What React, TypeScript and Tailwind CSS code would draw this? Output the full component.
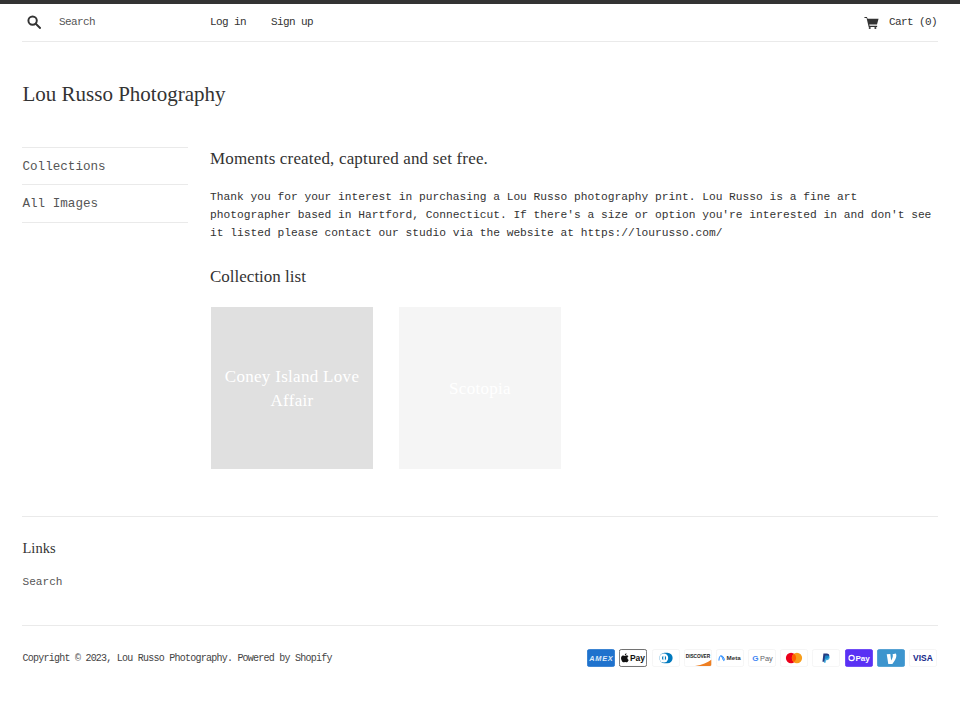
const mono = "font-['Liberation_Mono',monospace]"
const serif = "font-['Liberation_Serif',serif]"

const Card = ({ children, bg = '#fff', border = '#f2f2f2' }: { children: React.ReactNode; bg?: string; border?: string }) => (
  <svg width="28" height="18" viewBox="0 0 38 24" className="block">
    <rect x="0.5" y="0.5" width="37" height="23" rx="2.5" fill={bg} stroke={border} />
    {children}
  </svg>
)

const cardText = 'Liberation Sans, sans-serif'

function PaymentIcons() {
  return (
    <div className="mr-[1px] flex items-center gap-[4.2px]">
      <Card bg="#1f72cd" border="#1f72cd">
        <text x="19" y="15.5" textAnchor="middle" fontFamily={cardText} fontSize="10" fontWeight="700" fontStyle="italic" fill="#dbe9f8" textLength="32">AMEX</text>
      </Card>
      <Card border="#3c3c3c">
        <path d="M8.600 8.600c-.5.5-1.200.9-1.800.8-.1-.7.2-1.400.6-1.900.5-.5 1.200-.9 1.800-.9.1.8-.2 1.500-.6 2zm.6 1c-1-.1-1.900.6-2.400.6s-1.200-.6-2-.6c-1 0-2 .6-2.500 1.500-1.100 1.900-.3 4.700.8 6.200.5.8 1.200 1.600 2 1.600.8 0 1.100-.5 2.100-.5s1.300.5 2.100.5c.9 0 1.400-.8 1.900-1.500.6-.9.9-1.700.9-1.800 0 0-1.700-.7-1.700-2.600 0-1.600 1.300-2.400 1.400-2.500-.8-1.100-2-1.300-2.600-1.300z" fill="#111" transform="translate(1 -1)" />
        <text x="25" y="16.500" textAnchor="middle" fontFamily={cardText} fontSize="11.500" fontWeight="700" fill="#111">Pay</text>
      </Card>
      <Card>
        <rect x="10" y="5" width="18" height="14" rx="7" fill="#0079be" />
        <circle cx="16" cy="12" r="6" fill="#fff" />
        <path d="M13.500 12a3.500 3.500 0 0 1 1.800-3v6a3.500 3.500 0 0 1-1.800-3zm4 3V9a3.500 3.500 0 0 1 0 6z" fill="#0079be" />
      </Card>
      <Card>
        <path d="M37 14.500V21a2 2 0 0 1-2 2H15c10-1.500 17-4.500 22-8.500z" fill="#ee7f22" />
        <text x="19" y="12.500" textAnchor="middle" fontFamily={cardText} fontSize="6.500" fontWeight="700" fill="#222" textLength="33">DISCOVER</text>
      </Card>
      <Card>
        <path d="M4 15.500c0-3 1-6.500 2.500-6.500 2 0 3 6.500 4 6.500.9 0 .9-1.500.2-3.300-1-2-2.200-3.200-3.500-3.200" fill="none" stroke="#0a7cff" strokeWidth="1.300" />
        <text x="24" y="15" textAnchor="middle" fontFamily={cardText} fontSize="8.500" fontWeight="700" fill="#333">Meta</text>
      </Card>
      <Card>
        <text x="10" y="16" textAnchor="middle" fontFamily={cardText} fontSize="11" fontWeight="700" fill="#4285f4">G</text>
        <text x="25" y="16" textAnchor="middle" fontFamily={cardText} fontSize="10" fill="#5f6368">Pay</text>
      </Card>
      <Card>
        <circle cx="15" cy="12" r="7" fill="#eb001b" />
        <circle cx="23" cy="12" r="7" fill="#f79e1b" />
        <path d="M19 6.300a7 7 0 0 1 0 11.400 7 7 0 0 1 0-11.400z" fill="#ff5f00" />
      </Card>
      <Card>
        <path d="M15.500 6h4.500c2.500 0 3.800 1.300 3.400 3.400-.4 2.300-2 3.500-4.300 3.500h-1.300l-.7 4.100h-2.900z" fill="#253b80" />
        <path d="M18 8.500h3.600c1.800.3 2.700 1.400 2.300 3.200-.4 2.200-1.900 3.200-3.900 3.200h-1l-.6 3.600h-2.300z" fill="#179bd7" opacity="0.8" />
      </Card>
      <Card bg="#5a31f4" border="#5a31f4">
        <circle cx="9" cy="12" r="3.600" fill="none" stroke="#fff" strokeWidth="1.500" />
        <text x="24" y="16" textAnchor="middle" fontFamily={cardText} fontSize="11" fontWeight="700" fill="#fff">Pay</text>
      </Card>
      <Card bg="#3d95ce" border="#3d95ce">
        <path d="M25.500 6c.5.900.8 1.800.8 2.900 0 3.600-3 8.200-5.500 11.100h-5.500L13.200 7l4.900-.5 1.100 8.800c1-1.700 2.300-4.300 2.300-6.100 0-1-.2-1.700-.4-2.200z" fill="#fff" />
      </Card>
      <Card>
        <text x="19" y="16" textAnchor="middle" fontFamily={cardText} fontSize="11.500" fontWeight="700" fill="#142688">VISA</text>
      </Card>
    </div>
  )
}

function Tile({ title, bg }: { title: string; bg: string }) {
  return (
    <a className={`flex h-[162px] w-[162px] items-center justify-center px-2 pt-[2px] text-center ${serif} text-[17px] leading-6 tracking-[0.3px] text-white ${bg}`}>
      {title}
    </a>
  )
}

export default function App() {
  return (
    <div className={`min-h-[720px] bg-white ${mono} text-[#333]`}>
      <div className="h-1 bg-[#333]" />
      <div className="px-[22px]">
        <header className="flex h-[38px] items-center border-b border-[#eaeaea] text-[11px] tracking-[-0.6px]">
          <div className="flex w-[188px] items-center">
            <svg width="14" height="14" viewBox="0 0 20 20" className="ml-[5px] mb-[1px]" fill="none" stroke="#333" strokeWidth="2.800">
              <circle cx="8" cy="8" r="6" />
              <path d="M12.500 12.500 18.500 18.500" strokeLinecap="square" />
            </svg>
            <span className="ml-[18px] text-[#555]">Search</span>
          </div>
          <nav className="flex gap-[25px]">
            <a>Log in</a>
            <a>Sign up</a>
          </nav>
          <div className="ml-auto mr-[1px] flex items-center">
            <svg width="15" height="12" viewBox="0 0 20 17" fill="#333" className="mr-[10px]">
              <path d="M0 0h3.500l1 2.500H20l-2.200 8H6.800l.5 2H18v1.500H6L3 1.500H0z" />
              <circle cx="7.500" cy="15.500" r="1.500" />
              <circle cx="15.500" cy="15.500" r="1.500" />
            </svg>
            <span>Cart (0)</span>
          </div>
        </header>
        <h1 className={`mt-[39px] ${serif} pl-[0.5px] text-[21px] leading-[26px] text-[#333]`}>Lou Russo Photography</h1>
        <div className="mt-[40px] flex gap-[22px]">
          <aside className="w-[166px] text-[12.600px] text-[#555]">
            <div className="flex h-[38px] items-center border-y border-[#eaeaea] pl-[0.5px] pt-[2px]">Collections</div>
            <div className="flex h-[38px] items-center border-b border-[#eaeaea] pl-[0.5px] pt-[2px]">All Images</div>
          </aside>
          <main className="flex-1">
            <h2 className={`${serif} mt-[1px] text-[17px] leading-[22px] tracking-[0.17px]`}>Moments created, captured and set free.</h2>
            <p className="mt-[18px] text-[11.240px] leading-[18px]">
              Thank you for your interest in purchasing a Lou Russo photography print. Lou Russo is a fine art photographer based in Hartford, Connecticut. If there's a size or option you're interested in and don't see it listed please contact our studio via the website at https://lourusso.com/
            </p>
            <h2 className={`${serif} mt-[24px] text-[17px] leading-[22px]`}>Collection list</h2>
            <div className="ml-[1px] mt-[19px] flex gap-[26px]">
              <Tile title="Coney Island Love Affair" bg="bg-[#e0e0e0]" />
              <Tile title="Scotopia" bg="bg-[#f5f5f5]" />
            </div>
          </main>
        </div>
        <footer className="mt-[47px] border-t border-[#eaeaea]">
          <h3 className={`${serif} mt-[22px] pl-[0.5px] text-[14.500px] leading-[18px]`}>Links</h3>
          <a className="mt-[15px] block pl-[0.5px] pt-[1px] text-[11.100px] leading-[18px] text-[#555]">Search</a>
          <div className="mt-[34px] flex h-[64px] items-center justify-between border-t border-[#eaeaea]">
            <span className="pl-[0.5px] pt-[1px] text-[10px] tracking-[-0.76px] text-[#444]">Copyright © 2023, Lou Russo Photography. Powered by Shopify</span>
            <PaymentIcons />
          </div>
        </footer>
      </div>
    </div>
  )
}
